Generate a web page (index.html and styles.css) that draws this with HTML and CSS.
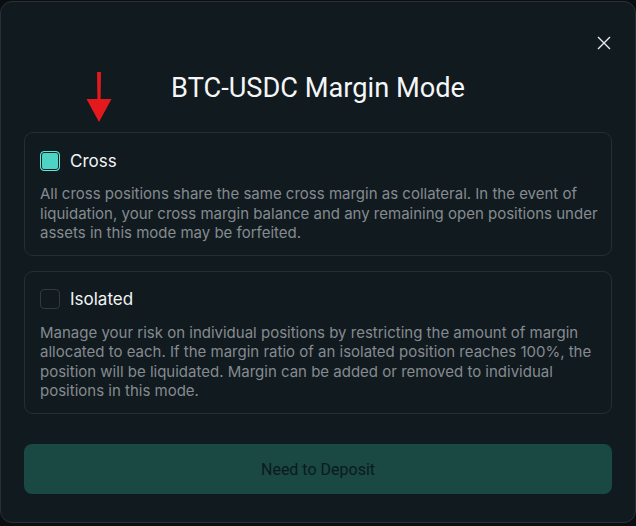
FILE: index.html
```html
<!DOCTYPE html>
<html>
<head>
<meta charset="utf-8">
<link rel="stylesheet" href="styles.css">
</head>
<body>
<div class="modal">
  <div class="modal-top">
    <button class="close" aria-label="Close">
      <svg width="14" height="14" viewBox="0 0 14 14"><path d="M1 1L13 13M13 1L1 13" stroke="#e8ecee" stroke-width="1.4" fill="none"/></svg>
    </button>
  </div>
  <div class="title-row">
    <svg class="arrow" width="26" height="52" viewBox="0 0 26 52"><path d="M11 0H15L14.6 27H25.5L13 50L0.5 27H11.4Z" fill="#e3191d"/></svg>
    <h1 class="title">BTC-USDC Margin Mode</h1>
  </div>
  <div class="options">
    <div class="option">
      <div class="option-head">
        <span class="check checked"></span>
        <span class="option-label">Cross</span>
      </div>
      <p class="option-desc">All cross positions share the same cross margin as collateral. In the event of liquidation, your cross margin balance and any remaining open positions under assets in this mode may be forfeited.</p>
    </div>
    <div class="option">
      <div class="option-head">
        <span class="check"></span>
        <span class="option-label">Isolated</span>
      </div>
      <p class="option-desc">Manage your risk on individual positions by restricting the amount of margin allocated to each. If the margin ratio of an isolated position reaches 100%, the position will be liquidated. Margin can be added or removed to individual positions in this mode.</p>
    </div>
  </div>
  <button class="deposit">Need to Deposit</button>
</div>
</body>
</html>
```
FILE: styles.css
```css
* { box-sizing: border-box; }
html, body { margin: 0; padding: 0; }
body {
  background: #0b0e11;
  width: 636px;
  height: 526px;
  overflow: hidden;
  padding-top: 1px;
}
.modal {
  width: 636px;
  height: 522px;
  background: #111a1f;
  border: 1px solid #2a3036;
  border-radius: 12px;
  padding: 0 23px;
  display: flex;
  flex-direction: column;
}
.modal-top {
  display: flex;
  justify-content: flex-end;
  padding-top: 34px;
  height: 50px;
  padding-right: 1px;
}
.close {
  background: none;
  border: 0;
  padding: 0;
  width: 14px;
  height: 14px;
  cursor: pointer;
  display: block;
}
.close svg { display: block; }
.title-row {
  position: relative;
  height: 80px;
  display: flex;
  justify-content: center;
}
.arrow {
  position: absolute;
  left: 62px;
  top: 20px;
}
.title {
  margin: 0;
  margin-top: 19px;
  font-family: Roboto, "Liberation Sans", sans-serif;
  font-weight: 400;
  font-size: 27.2px;
  line-height: 34px;
  color: #f4f6f7;
  letter-spacing: 0;
}
.options {
  display: flex;
  flex-direction: column;
  gap: 15px;
}
.option {
  border: 1px solid #262e34;
  border-radius: 9px;
  padding: 17px 10px 12px 15px;
}
.option-head {
  display: flex;
  align-items: center;
  gap: 10px;
  height: 21px;
}
.check {
  width: 20px;
  height: 20px;
  border-radius: 4px;
  border: 1px solid #323a40;
  display: block;
}
.check.checked {
  background: #4fd3c4;
  border: 1px solid #5fe8d6;
  box-shadow: inset 0 0 0 1px #102026;
}
.option-label {
  font-family: Inter, "Noto Sans", sans-serif;
  font-size: 17px;
  color: #f2f4f5;
  font-weight: 400;
}
.option-desc {
  margin: 13px 0 0;
  font-family: Inter, "Noto Sans", sans-serif;
  font-size: 15px;
  line-height: 19.5px;
  color: #858b90;
}
.deposit {
  margin-top: 30px;
  height: 50px;
  width: 100%;
  border: 0;
  border-radius: 8px;
  background: #1a4842;
  color: #0c1a1c;
  font-family: Roboto, "Liberation Sans", sans-serif;
  font-size: 16px;
  padding-top: 2px;
}
```
